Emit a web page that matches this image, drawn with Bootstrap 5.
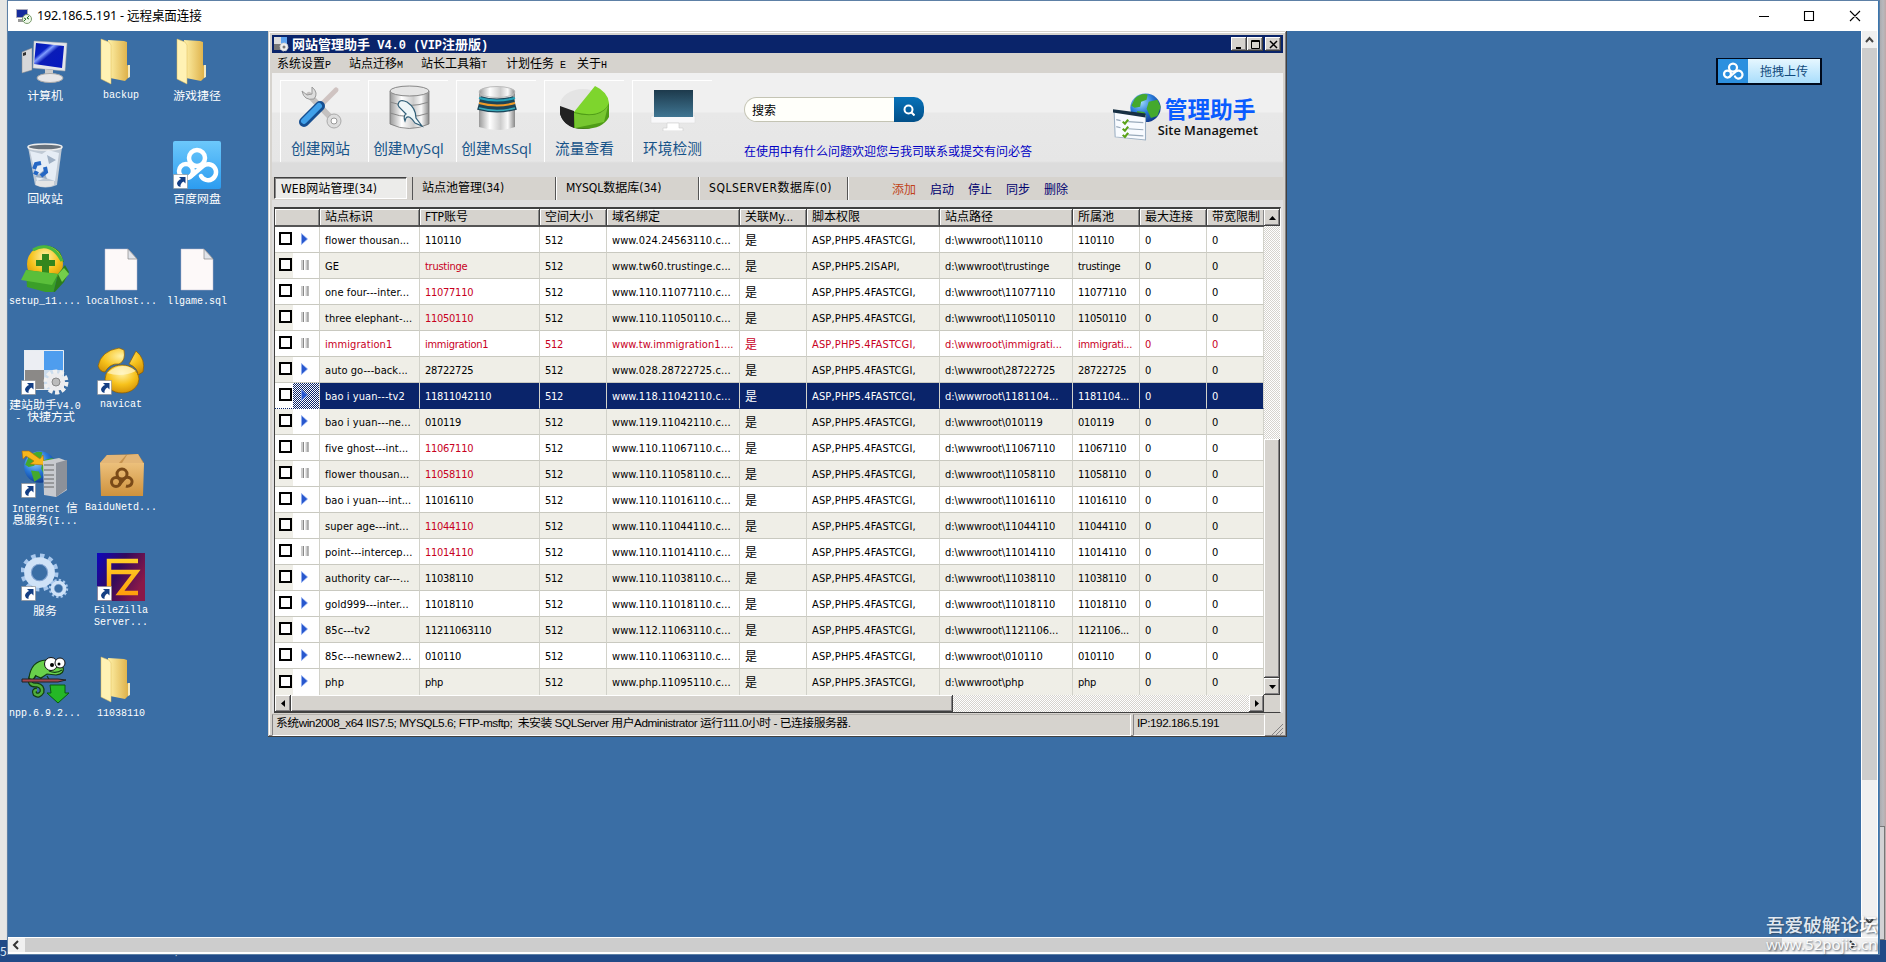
<!DOCTYPE html>
<html lang="zh-CN">
<head>
<meta charset="utf-8">
<title>192.186.5.191 - 远程桌面连接</title>
<link rel="stylesheet" href="https://cdn.jsdelivr.net/npm/bootstrap@5.3.0/dist/css/bootstrap.min.css">
<script src="https://cdn.jsdelivr.net/npm/bootstrap@5.3.0/dist/js/bootstrap.bundle.min.js"></script>
<style>
*{box-sizing:border-box}
body{margin:0;width:1886px;height:962px;overflow:hidden;background:#214a87;color:#000;font:12px/14px "Liberation Sans","Noto Sans CJK SC",sans-serif;white-space:nowrap}
svg{display:block;flex:none}
.defs{position:absolute}
.screen{position:relative;width:1886px;height:962px;overflow:hidden}
.behind{position:absolute;left:0;top:0;width:1886px;height:940px;background:linear-gradient(90deg,#e6e6e4 0 6px,#c8ccd0 8px,#a7a7ab 1879px,#b9b9bd 1883px,#bca9a9 1886px)}
.behind-box{position:absolute;right:1px;top:826px;width:7px;height:114px;background:#d2d2d4;border:1px solid #777;border-left:0}
.peek{position:absolute;top:941px;color:#dce7f5;font:12px/16px "Noto Sans CJK SC",sans-serif}
.rdp{position:absolute;left:8px;top:1px;width:1871px;height:953px;border-right:1px solid #3a75ad;background:#fff;box-shadow:0 0 0 1px #5d80a6}
.rdp-title{height:30px;font:12.6px/30px "Noto Sans","Noto Sans CJK SC",sans-serif;letter-spacing:-.17px}
.desk{width:1853px;height:906px;background:#3a6ea5;position:relative}
.vbar{width:15px;margin-left:1px;background:#f0f0f0}
.vbar i{display:block;height:732px;background:#cdcdcd}
.hbar{height:14px;margin-top:1px;background:#f0f0f0}
.hbar i{display:block;width:1757px;background:#cdcdcd}
.desk-icons{position:absolute;left:-1px;top:7px;display:grid;grid-template-columns:repeat(3,76px);grid-template-rows:repeat(7,103px);grid-auto-flow:column}
.ico{display:flex;flex-direction:column;align-items:center;color:#fff;text-align:center;font:11.9px/12px "Noto Sans CJK SC",sans-serif}
.ico div{padding-top:3px;white-space:nowrap}
.ico div.m{padding-top:4px}
.m{font-family:"Liberation Mono",monospace;font-size:10px}
span.m{line-height:0}
.app{position:absolute;left:260px;top:0;width:1019px;height:706px;background:#d6d3ce;padding:4px;box-shadow:inset -1px -1px #404040,inset 1px 1px #d6d3ce,inset -2px -2px #848284,inset 2px 2px #fff}
.app-title{height:18px;background:#0a246a;color:#fff;font:bold 13px/18px "Noto Sans CJK SC",sans-serif}
.app-title .m{font-size:12px}
.tb{width:16px;height:14px;background:#d6d3ce;box-shadow:inset -1px -1px #404040,inset 1px 1px #fff,inset -2px -2px #848284;display:flex;align-items:center;justify-content:center}
.menu{height:20px;line-height:20px;padding-left:5px;font-family:"Noto Sans CJK SC",sans-serif}
.tools{height:104px;background:linear-gradient(#f0f0f0 0 39px,#e8e8e8 40px,#e6e6e6 88px,#dcdcdc 90px 100%);padding-left:8px}
.tool{width:80px;height:82px;margin:7px 8px 0 0;border-left:1px solid #fff;border-top:1px solid #fff;display:flex;flex-direction:column;align-items:center;color:#165389;font:14.7px/18px "Open Sans","Noto Sans CJK SC",sans-serif}
.tool svg{margin:4px 0 8px}
.find{width:180px;height:25px;margin-top:24px}
.find-in{width:150px;border:1px solid #c4c4b4;border-right:0;border-radius:13px 0 0 13px;background:#fffffa;padding-left:7px;font:12px/24px "Noto Sans CJK SC",sans-serif}
.find-go{width:30px;background:linear-gradient(#0872b9,#024f88);border-radius:0 10px 10px 0}
.hint{color:#0000c4;font:12px/14px "Noto Sans CJK SC",sans-serif;margin-top:22px}
.brand{margin-top:18px}
.brand-cn{font:bold 22.7px/22px "Noto Sans CJK SC",sans-serif;color:#0a5cff}
.brand-en{font:600 12.8px/17px "Open Sans",sans-serif;color:#111;margin:2px 0 0 -7px}
.tabs{height:23px;line-height:22px;font-family:"DejaVu Sans Condensed","DejaVu Sans","Noto Sans CJK SC",sans-serif;font-size:12px}
.tabs .tab{width:143px;border-right:1px solid #555;box-shadow:1px 0 #fff}
.tabs .first{width:133px;height:22px;margin:0 5px 0 2px;padding-left:6px;border:1px solid #fff;border-top-color:#404040;border-left-color:#404040;box-shadow:inset 1px 1px #888;background:#ececea;letter-spacing:.1px}
.act{font:12px/24px "Noto Sans CJK SC",sans-serif;color:#00006e}
.grid-wrap{height:513px;padding:7px 2px 0 2px;background:#e0dfdf}
.grid-in{height:506px;border:2px solid #404040;border-width:2px 1px 1px 1px;border-right-color:#fff;background:#d6d3ce}
.sites{table-layout:fixed;width:989px;border-collapse:separate;border-spacing:0;background:#fff}
.sites th{height:18px;padding:0 0 0 5px;background:#d6d3ce;border-right:1px solid #404040;border-bottom:2px solid #555;box-shadow:inset 1px 1px #fff,inset -1px 0 #888;font:12px/15px "DejaVu Sans Condensed","Noto Sans CJK SC",sans-serif;overflow:hidden}
.sites td{height:26px;padding:2px 0 0 5px;line-height:16px;border-right:1px solid #d2d2ca;border-bottom:1px solid #c9c9c0;font-family:"DejaVu Sans Condensed","DejaVu Sans","Noto Sans CJK SC",sans-serif;font-size:11px;letter-spacing:-.27px;overflow:hidden}
.sites .c0{letter-spacing:.07px}
.sites .c3{letter-spacing:.09px}
.sites .c5{letter-spacing:.15px}
.sites .c6{letter-spacing:-.03px}
.sites tr:nth-child(even) td{background:#efeee7}
.sites tr:last-child td{border-bottom:0}
.sites .red{color:#c8001e}
.sites .c4{font-size:12px}
.sites tr.on td{background:#0a246a;color:#fff;border-bottom:1px dotted #0a246a}
.sites tr td.pick{padding:0!important;background:linear-gradient(90deg,transparent 18px,#fff 18px)}
.sites tr:nth-child(even) td.pick{background:linear-gradient(90deg,#efeee7 18px,#fff 18px)}
.sites tr.on td.pick{background:linear-gradient(90deg,#fff 18px,transparent 18px),repeating-conic-gradient(#0a246a 0 25%,#fff 0 50%) 0 0/2px 2px}
.pick i{width:13px;height:13px;border:2px solid #000;background:#fff;margin:-2px 9px 0 4px}
.pick svg{margin-top:-2px}
.track{background:repeating-conic-gradient(#d6d3ce 0 25%,#fff 0 50%) 0 0/2px 2px}
.raised{background:#d6d3ce;box-shadow:inset -1px -1px #404040,inset 1px 1px #fff,inset -2px -2px #848284;display:flex;align-items:center;justify-content:center}
.status{height:22px;margin-top:1px;font:11.8px/17px "Liberation Sans","Noto Sans CJK SC",sans-serif}
.sunk{border:1px solid #fff;border-left-color:#848284;border-top-color:#b5b2ad;height:22px;letter-spacing:-.48px}
.up{position:absolute;left:1708px;top:27px;width:106px;height:27px;background:#000a1c;padding:1px 2px 2px 2px}
.up b{width:30px;background:#2c90df}
.up span{flex:1;background:linear-gradient(#e6f7ff,#a9ddfb);color:#114a7c;font:12px/24px "Noto Sans CJK SC",sans-serif;text-align:center}
.wm{position:absolute;left:1766px;top:911px;color:#fff;opacity:.85;text-shadow:1px 1px 2px #345;font:500 18.6px/25px "Noto Sans CJK SC",sans-serif}
.wm div:last-child{font:15.1px/16px "Noto Sans",sans-serif}
</style>
</head>
<body>
<svg class="defs" width="0" height="0">
<defs>
<linearGradient id="fy" x1="0" x2="1"><stop offset="0" stop-color="#fff1a8"/><stop offset="1" stop-color="#dcae45"/></linearGradient>
<linearGradient id="mt" x1="0" x2="1"><stop offset="0" stop-color="#999"/><stop offset=".3" stop-color="#fff"/><stop offset=".6" stop-color="#ccc"/><stop offset=".8" stop-color="#fafafa"/><stop offset="1" stop-color="#888"/></linearGradient>
<linearGradient id="bl" x1="0" y1="0" x2="1" y2="1"><stop offset="0" stop-color="#0014a8"/><stop offset=".3" stop-color="#0a22c8"/><stop offset=".38" stop-color="#7f9cff"/><stop offset=".5" stop-color="#0a1cb8"/><stop offset="1" stop-color="#0518c0"/></linearGradient>
<linearGradient id="bx" x1="0" y1="0" x2="0" y2="1"><stop offset="0" stop-color="#ecc07b"/><stop offset="1" stop-color="#cf923d"/></linearGradient>
<linearGradient id="sky" x1="0" y1="0" x2="0" y2="1"><stop offset="0" stop-color="#6cc8fb"/><stop offset="1" stop-color="#2c9cf0"/></linearGradient>
<linearGradient id="scr" x1="0" y1="0" x2="0" y2="1"><stop offset="0" stop-color="#1d3a4c"/><stop offset="1" stop-color="#3f7592"/></linearGradient>
<linearGradient id="fz" x1="0" x2="1" y1="0" y2=".5"><stop offset="0" stop-color="#0d06c0"/><stop offset=".5" stop-color="#320a5c"/><stop offset="1" stop-color="#8a1848"/></linearGradient>
<linearGradient id="or" gradientUnits="userSpaceOnUse" x1="0" y1="5" x2="0" y2="45"><stop offset="0" stop-color="#ffd22a"/><stop offset="1" stop-color="#ff9a08"/></linearGradient>
<radialGradient id="gold" cx=".5" cy=".3" r=".8"><stop offset="0" stop-color="#fff2a6"/><stop offset=".5" stop-color="#f7c21c"/><stop offset="1" stop-color="#c98400"/></radialGradient>
<radialGradient id="earth" cx=".35" cy=".3" r=".8"><stop offset="0" stop-color="#9fdcff"/><stop offset=".5" stop-color="#2878d8"/><stop offset="1" stop-color="#0b2d7c"/></radialGradient>
<symbol id="arrow" viewBox="0 0 15 15"><path fill="#fff" stroke="#888" stroke-width=".6" d="M.5.5h14v14H.5z"/><path fill="#143f84" d="M6 3h6.500v6.500l-2-2q-3.500 2-3 5.500-3-.5-3.500-3.500Q4.500 6.500 8 5z"/></symbol>
<symbol id="folder" viewBox="0 0 48 48"><path fill="url(#fy)" d="M11 2 27 3l3 1v23l2 1v11l-4 4-15-3z"/><path fill="#fff2b4" stroke="#dcb95a" stroke-width=".5" d="M4 1 12 4q3 2 2 8v34L4 41z"/><path fill="#f3e9c0" d="M31 27h2v12l-2 1z"/></symbol>
<symbol id="file" viewBox="0 0 48 48"><path fill="#fdf9f9" stroke="#bbc" stroke-width=".5" d="M8 5h23l9 10v31H8z"/><path fill="#e1e4ea" stroke="#888" stroke-width=".7" d="M31 5v10h9z"/></symbol>
<symbol id="cloud" viewBox="0 0 48 48"><g fill="none" stroke="#fff" stroke-width="4.500" stroke-linecap="round"><circle cx="24" cy="17" r="8"/><path d="M28 35A8 8 0 1 0 30 25L17 36"/><circle cx="13" cy="30" r="7"/></g></symbol>
<symbol id="globe" viewBox="0 0 30 30"><circle cx="15" cy="15" r="14" fill="url(#earth)"/><path fill="#44a92d" d="M5 6q6-6 12-4l-1 5-5 2-1 5-5 1-3-2zM18 9l8-2 3 7-3 9-6 2-4-9zM7 18l7 1 2 5-6 4z"/></symbol>
<symbol id="gear" viewBox="0 0 40 40"><circle cx="20" cy="20" r="15" fill="none" stroke="#a9c8ec" stroke-width="7" stroke-dasharray="4 3.850"/><circle cx="20" cy="20" r="11.500" fill="none" stroke="#cfe2f7" stroke-width="7"/><circle cx="20" cy="20" r="8" fill="none" stroke="#7fa1cf"/></symbol>
<symbol id="play" viewBox="0 0 7 12"><path fill="#2858ce" stroke="#8cabf0" stroke-width=".7" d="M.5.5 6.500 6 .5 11.500z"/></symbol>
<symbol id="pause" viewBox="0 0 8 10"><path fill="#ccc" d="M0 0h3v10H0zM4.500 0h3v10h-3z"/><path fill="#888" d="M2 0h1v10H2zM6.500 0h1v10h-1z"/></symbol>
</defs>
</svg>
<div class="screen">
<div class="behind"><div class="behind-box"></div></div>
<span class="peek" style="left:0;top:943px">5</span><span class="peek" style="left:30px">文件 · 编辑</span><span class="peek" style="left:130px">01</span><span class="peek" style="left:175px">)</span><span class="peek" style="left:204px">远程桌面</span><span class="peek" style="left:280px">▭</span><span class="peek" style="left:1640px">▭</span>
<main class="rdp">
 <div class="rdp-title d-flex align-items-center">
  <svg width="16" height="16" viewBox="0 0 16 16" style="margin:0 5px 0 8px"><path fill="#152c9c" stroke="#aab" d="M.5 1.500h11v8H.5z"/><path fill="#999" d="M2 11h8v3H2z"/><circle cx="11" cy="11" r="4.500" fill="#eff8ea" stroke="#7b9c6c"/><path d="m8 10 2 1-2 2m5-5-2 2 2 1" fill="none" stroke="#287328"/></svg>
  <span>192.186.5.191 - 远程桌面连接</span>
  <svg class="ms-auto" style="margin-right:13px" width="110" height="12" viewBox="0 0 110 12" fill="none" stroke="#000" stroke-width="1.100"><path d="M4 6.500h10M49.500 1.500h9v9h-9zM95 1l10 10M105 1 95 11"/></svg>
 </div>
 <div class="d-flex">
 <section class="desk">
  <div class="desk-icons">
   <div class="ico"><svg width="48" height="48" viewBox="0 0 48 48"><path fill="#d7d7d9" stroke="#888" stroke-width=".5" d="m1 14 10-4v22L1 35z"/><path fill="#333" d="m2 15 3-1v3l-3 1z"/><path fill="#e3e6ea" stroke="#aaa" stroke-width=".5" d="m13 3 33 2-2 28-32-3z"/><path fill="url(#bl)" d="m15 5 28 3-2 22-28-4z"/><path fill="#ccc" d="m24 31 8 1v6h-8z"/><ellipse cx="29" cy="40" rx="13" ry="4.500" fill="#e6e6e8" stroke="#aaa"/></svg><div>计算机</div></div>
   <div class="ico"><svg width="48" height="48" viewBox="0 0 48 48"><path fill="#bfc9d4" d="m7 6 34 0-5 38q-12 5-22 0z"/><path fill="#e6edf5" d="m9 10 12 3 6-4 11 3-4 28-9-3-9 3z"/><path fill="#9fb0c4" d="m26 14 9 5-7 4zM14 36l9-7 3 9z"/><ellipse cx="24" cy="6" rx="17" ry="3" fill="#67717b" stroke="#eee" stroke-width="1.500"/><path fill="none" stroke="#2567c4" stroke-width="4" d="m13 28 2-5 5-1m4 4 1 5-5 4m-3-2-4-2"/><path fill="#e5e5e5" d="M15 40h18v4q-9 4-18 0z"/></svg><div>回收站</div></div>
   <div class="ico"><svg width="48" height="48" viewBox="0 0 48 48"><path fill="#26912a" d="M11 8Q25-5 39 8l4 10H26z"/><circle cx="24" cy="20" r="18" fill="url(#gold)"/><path fill="none" stroke="#4bb83c" stroke-width="3" d="M12 6q18-10 29 11"/><path fill="#34861d" d="M21 10h7v6h6v6h-6v7h-7v-7h-6v-6h6z"/><path fill="#3b9f28" d="m5 26 32 4-5 20-26-7z"/><path fill="#5abf3a" d="m0 36 5-10 32 4-6 11z"/><path fill="#2b7d1c" d="m37 30 7-9 4 7-5 10-11 12z"/><path fill="#74cf4a" d="m37 30 6-6 5 6-7 8z"/></svg><div class="m">setup_11....</div></div>
   <div class="ico"><svg width="48" height="48" viewBox="0 0 48 48"><path fill="#eceef3" d="M3 3h20v20H3z"/><path fill="#4e9dee" d="M23 3h20v20H23z"/><path fill="#8b8987" d="M3 23h20v20H3z"/><path fill="#cbdced" d="M23 23h20v20H23z"/><path fill="none" stroke="#e8edf2" d="M3.500 3.500h39v39h-39z"/><circle cx="35" cy="35" r="10" fill="none" stroke="#f0f0f0" stroke-width="5" stroke-dasharray="4 2.280"/><circle cx="35" cy="35" r="9" fill="#ececee"/><circle cx="35" cy="35" r="4" fill="#bbb" stroke="#888"/><use href="#arrow" x="0" y="33" width="15" height="15"/></svg><div>建站助手<span class="m">V4.0</span><br><span class="m">-&nbsp;</span>快捷方式</div></div>
   <div class="ico"><svg width="48" height="48" viewBox="0 0 48 48"><use href="#globe" x="2" y="0" width="34" height="34"/><path fill="#f7b71c" stroke="#b96f00" stroke-width=".6" d="m1 1 7 0 11 8 3-4 1 10-14-1 4-3-8-5-3 3z"/><path fill="#c8cacf" d="m22 11 16-3 8 3v29l-11 7-12-2z"/><path fill="#8d9199" d="m35 13 11-3v29l-11 8z"/><path stroke="#666" d="M23 15h10m-10 5h10m-10 5h10m-10 4h10m-10 4h10m-10 4h10"/><use href="#arrow" x="0" y="33" width="15" height="15"/></svg><div><span class="m">Internet&nbsp;</span>信<br>息服务<span class="m">(I...</span></div></div>
   <div class="ico"><svg width="48" height="48" viewBox="0 0 48 48"><use href="#gear" x="-2" y="-1" width="41" height="41"/><use href="#gear" x="27" y="25" width="21" height="21"/><use href="#arrow" x="0" y="33" width="15" height="15"/></svg><div>服务</div></div>
   <div class="ico"><svg width="48" height="48" viewBox="0 0 48 48"><path fill="none" stroke="#123c12" stroke-width="5" d="M10 21q-3 9 6 8 6 1 5 7-3 5-7 2-2-4 2-4"/><path fill="none" stroke="#4fae3c" stroke-width="2.500" d="M10 21q-3 9 6 8 6 1 5 7-3 5-7 2-2-4 2-4"/><path fill="#69d04b" stroke="#123c12" stroke-width="1.200" d="M25 4Q10 5 8 22l3 3 4-5 5 2 6-4 9 1q9-1 7-8z"/><path fill="none" stroke="#123c12" stroke-width="1.200" d="M28 15q7 3 13-1M15 19l-3 5m9-3-4 5m9-6 3 5"/><circle cx="30" cy="8" r="6.500" fill="#fff" stroke="#111"/><circle cx="39" cy="7" r="5" fill="#fff" stroke="#111"/><circle cx="31" cy="9" r="2"/><circle cx="38" cy="8" r="1.500"/><path fill="#a4464e" stroke="#222" d="M1 23h36l8 1-8 2H1z"/><path fill="#25b726" stroke="#085d0a" d="M29 29h15v8h4L37 47 26 37h4z"/></svg><div class="m">npp.6.9.2...</div></div>
   <div class="ico"><svg width="48" height="48"><use href="#folder"/></svg><div class="m">backup</div></div>
   <div></div>
   <div class="ico"><svg width="48" height="48"><use href="#file"/></svg><div class="m">localhost...</div></div>
   <div class="ico"><svg width="48" height="48" viewBox="0 0 48 48"><ellipse cx="25" cy="32" rx="17" ry="14" fill="url(#gold)" stroke="#8b5c00" stroke-width=".7"/><path fill="url(#gold)" stroke="#8b5c00" stroke-width=".7" d="M27 3q2 11-5 14-9-1-14 8-5 0-7-6Q4 4 22 1zM39 4q10 8 7 21l-5 3q0-7-9-11z"/><path fill="#fff7ce" opacity=".7" d="M10 26q15-13 29-2-14 7-29 2z"/><use href="#arrow" x="0" y="33" width="15" height="15"/></svg><div class="m">navicat</div></div>
   <div class="ico"><svg width="48" height="48" viewBox="0 0 48 48"><path fill="#c6924c" d="m3 13 7-8 31-1 6 9z"/><path fill="#e3b677" d="m3 13 7-8 19 0-7 8zM30 5l11-1 5 9H25z"/><path fill="url(#bx)" d="M3 13h44l-1 33H4z"/><g fill="none" stroke="#7a4a18" stroke-width="3"><circle cx="25" cy="24" r="5"/><circle cx="19" cy="32" r="4.500"/><path d="M29 36a4.500 4.500 0 1 0-2-7l-5 6"/></g></svg><div class="m">BaiduNetd...</div></div>
   <div class="ico"><svg width="48" height="48" viewBox="0 0 48 48"><path fill="url(#fz)" d="M0 0h48v48H0z"/><path fill="none" stroke="url(#or)" stroke-width="4.500" d="M12 45V8h29M12 19h27L23 40h18"/><use href="#arrow" x="0" y="33" width="15" height="15"/></svg><div class="m">FileZilla<br>Server...</div></div>
   <div class="ico"><svg width="48" height="48"><use href="#folder"/></svg><div class="m">11038110</div></div>
   <div class="ico"><svg width="48" height="48"><use href="#folder"/></svg><div>游戏捷径</div></div>
   <div class="ico"><svg width="48" height="48" viewBox="0 0 48 48"><rect width="48" height="48" rx="2" fill="url(#sky)"/><use href="#cloud" width="48" height="48"/><use href="#arrow" x="0" y="33" width="15" height="15"/></svg><div>百度网盘</div></div>
   <div class="ico"><svg width="48" height="48"><use href="#file"/></svg><div class="m">llgame.sql</div></div>
  </div>

  <section class="app">
   <div class="app-title d-flex align-items-center">
    <svg width="15" height="15" viewBox="0 0 15 15" style="margin:0 3px 0 2px"><path fill="#ddd" d="M0 0h7v7H0z"/><path fill="#5ea3ef" d="M7 0h6v7H7z"/><path fill="#777" d="M0 7h7v6H0z"/><circle cx="10" cy="10" r="4" fill="#eee" stroke="#ccc" stroke-dasharray="2 1"/><circle cx="10" cy="10" r="1.500" fill="#777"/></svg>
    <span>网站管理助手<span class="m">&nbsp;V4.0&nbsp;(VIP</span>注册版<span class="m">)</span></span>
    <div class="d-flex ms-auto" style="padding-right:2px"><span class="tb"><svg width="9" height="9"><path d="M1 7h5v2H1z"/></svg></span><span class="tb"><svg width="9" height="9"><path fill="none" stroke="#000" d="M.5.500h8v8h-8zM0 1.500h9"/></svg></span><span class="tb" style="margin-left:2px"><svg width="9" height="9"><path stroke="#000" stroke-width="1.500" d="m1 1 7 7M8 1 1 8"/></svg></span></div>
   </div>
   <div class="menu d-flex"><span style="width:72px">系统设置<span class="m">P</span></span><span style="width:72px">站点迁移<span class="m">M</span></span><span style="width:85px">站长工具箱<span class="m">T</span></span><span style="width:71px">计划任务<span class="m">&nbsp;E</span></span><span>关于<span class="m">H</span></span></div>
   <div class="tools d-flex">
    <div class="tool"><svg width="48" height="46" viewBox="0 0 48 46"><path stroke="#c4c1c0" stroke-width="6" stroke-linecap="round" d="m12 10 24 25"/><circle cx="37" cy="36" r="7" fill="#ddd" stroke="#aaa"/><circle cx="37" cy="36" r="3" fill="#fff" stroke="#999"/><path fill="#ddd" stroke="#999" d="M5 6q2 10 12 8 5-6-2-12v7l-5 1z"/><path stroke="#cfc3c1" stroke-width="5" stroke-linecap="round" d="M39 5 24 20"/><path stroke="#174f91" stroke-width="10" stroke-linecap="round" d="M23 21 7 37"/><path stroke="#41a1ea" stroke-width="6" stroke-linecap="round" d="M22 21 7 36"/></svg>创建网站</div>
    <div class="tool"><svg width="48" height="46" viewBox="0 0 48 46"><path fill="url(#mt)" stroke="#777" stroke-width=".8" d="M5 6v33q19 9 39 0V6z"/><path fill="none" stroke="#888" d="M5 17q19 7 39 0M5 28q19 7 39 0"/><ellipse cx="24.500" cy="6" rx="19.500" ry="5" fill="#e5e5e5" stroke="#888"/><path fill="#eef6f8" stroke="#315f78" stroke-width="1.200" d="M13 20q1-7 9-3 9 6 9 16l6 8-7-3q-6-9-9-5l-1 3q-2-5 1-7l-7-7z"/></svg>创建MySql</div>
    <div class="tool"><svg width="48" height="46" viewBox="0 0 48 46"><path fill="url(#mt)" d="M6 6v36q18 6 36 0V6z"/><path fill="none" stroke="#1b4559" stroke-width="14" d="M6 18q18 5 36 0"/><path fill="none" stroke="#26a2b8" stroke-width="2" d="M6 13q18 5 36 0"/><path fill="none" stroke="#ef9a28" stroke-width="2" d="M6 18q18 5 36 0"/><path fill="none" stroke="#39aabb" stroke-width="1.500" d="M6 23q18 5 36 0"/><ellipse cx="24" cy="7" rx="18" ry="5.500" fill="url(#mt)" stroke="#bbb"/></svg>创建MsSql</div>
    <div class="tool"><svg width="52" height="46" viewBox="0 0 52 46"><ellipse cx="24" cy="26" rx="23" ry="18" fill="#222"/><ellipse cx="24" cy="20" rx="23" ry="16" fill="#e4e4e4"/><path fill="#222" d="M1 21v8q3 10 14 14V26z"/><path fill="#4f9c17" d="M15 27v16q27 4 35-11V18z"/><path fill="#7ed52d" d="M15 27 36 1q13 6 14 17-7 16-35 9z"/><path fill="#93e541" opacity=".6" d="M15 28q25 7 34-7l-4 16-29 6z"/></svg>流量查看</div>
    <div class="tool"><svg width="48" height="46" viewBox="0 0 48 46"><path fill="#f8f8fa" stroke="#ddd" stroke-width=".6" d="M2 31h44v7H2z"/><path fill="#fff" stroke="#ccc" stroke-width=".6" d="M18 38h12v5h4v3H14v-3h4z"/><path fill="url(#scr)" d="M5 5h39v27H5z"/></svg>环境检测</div>
    <div style="margin-left:24px"><div class="find d-flex"><div class="find-in">搜索</div><div class="find-go d-flex align-items-center justify-content-center"><svg width="12" height="12" fill="none" stroke="#fff" stroke-width="2"><circle cx="5.500" cy="5.500" r="4"/><path d="m8 8 3.500 3.500"/></svg></div></div>
    <div class="hint">在使用中有什么问题欢迎您与我司联系或提交有问必答</div></div>
    <div class="brand d-flex ms-auto" style="margin-right:25px"><svg width="52" height="51" viewBox="0 0 48 50" preserveAspectRatio="none"><use href="#globe" x="15" y="0" width="30" height="33"/><path fill="#f8fbff" stroke="#9db0c3" d="m1 19 29 5v24L2 45z"/><path fill="#173044" d="m0 18 30 4v4L0 21z"/><g stroke="#9ab" stroke-width="1.200"><path d="m14 30 14 1m-14 6 14 1m-14 5 14 1M3 28l4 1m-4 6 4 1"/></g><path fill="none" stroke="#5ba319" stroke-width="2" d="m9 30 2 2 3-4m-5 9 2 2 3-4m-5 8 2 2 3-4"/></svg><div style="margin-top:7px"><div class="brand-cn">管理助手</div><div class="brand-en">Site Managemet</div></div></div>
   </div>
   <div class="tabs d-flex"><div class="first">WEB网站管理(34)</div><div class="d-flex" style="border-left:1px solid #555"><div class="tab" style="padding-left:9px">站点池管理(34)</div><div class="tab" style="padding-left:10px">MYSQL数据库(34)</div><div class="tab" style="padding-left:10px;width:149px;letter-spacing:.55px">SQLSERVER数据库(0)</div></div><div class="act d-flex" style="gap:14px;margin-left:44px"><span style="color:#c0431a">添加</span><span>启动</span><span>停止</span><span>同步</span><span>删除</span></div></div>
   <div class="grid-wrap"><div class="grid-in">
    <div class="d-flex" style="height:486px">
     <table class="sites"><colgroup><col style="width:45px"><col style="width:100px"><col style="width:120px"><col style="width:67px"><col style="width:133px"><col style="width:67px"><col style="width:133px"><col style="width:133px"><col style="width:67px"><col style="width:67px"><col style="width:57px"></colgroup>
      <thead><tr><th></th><th>站点标识</th><th>FTP账号</th><th>空间大小</th><th>域名绑定</th><th>关联My...</th><th>脚本权限</th><th>站点路径</th><th>所属池</th><th>最大连接</th><th style="border-right:0">带宽限制</th></tr></thead>
      <tbody id="rows"></tbody></table>
     <div class="track d-flex flex-column" style="width:16px"><div class="raised" style="height:17px"><svg width="7" height="4"><path d="M0 4h7L3.500 0z"/></svg></div><div class="raised" style="height:239px;margin-top:213px"></div><div class="raised" style="height:17px"><svg width="7" height="4"><path d="M0 0h7L3.500 4z"/></svg></div></div>
    </div>
    <div class="d-flex" style="height:17px"><div class="raised" style="width:16px"><svg width="4" height="7"><path d="M4 0v7L0 3.500z"/></svg></div><div class="raised" style="width:662px"></div><div class="track" style="width:296px"></div><div class="raised" style="width:15px"><svg width="4" height="7"><path d="M0 0v7l4-3.500z"/></svg></div></div>
   </div></div>
   <div class="status d-flex"><div class="sunk" style="width:859px;padding-left:3px">系统win2008_x64 IIS7.5; MYSQL5.6; FTP-msftp;&nbsp; 未安装 SQLServer 用户Administrator 运行111.0小时 - 已连接服务器.</div><div class="sunk" style="width:132px;margin-left:2px;padding-left:3px">IP:192.186.5.191</div>
   <svg class="ms-auto mt-auto" width="13" height="13" stroke="#848284"><path d="M1 13 13 1M5 13l8-8M9 13l4-4"/></svg></div>
  </section>
  <div class="up d-flex"><b class="d-flex align-items-center justify-content-center"><svg width="24" height="24"><use href="#cloud"/></svg></b><span>拖拽上传</span></div>
 </section>
 <div class="vbar"><svg width="15" height="17" fill="none" stroke="#444" stroke-width="2"><path d="m4 11 3.500-4 3.500 4"/></svg><i></i><svg width="15" height="17" style="margin-top:133px" fill="none" stroke="#444" stroke-width="2"><path d="m4 6 3.500 4 3.500-4"/></svg></div>
 </div>
 <div class="hbar d-flex"><svg width="17" height="14" fill="none" stroke="#333" stroke-width="2"><path d="M10 3 6 7l4 4"/></svg><i></i><svg width="17" height="14" style="margin-left:62px" fill="none" stroke="#333" stroke-width="2"><path d="m6 3 4 4-4 4"/></svg></div>
</main>
<div class="wm"><div>吾爱破解论坛</div><div>www.52pojie.cn</div></div>
</div>
<script>
// running flag | site | ftp account | domain | script rights | path | pool | red cells (1 = account, 2 = whole row)
const sites = [
[1,'flower thousan...','110110','www.024.24563110.c...','5.4FASTCGI','110110','110110'],
[0,'GE','trustinge','www.tw60.trustinge.c...','5.2ISAPI','trustinge','trustinge',1],
[0,'one four---inter...','11077110','www.110.11077110.c...','5.4FASTCGI','11077110','11077110',1],
[0,'three elephant-...','11050110','www.110.11050110.c...','5.4FASTCGI','11050110','11050110',1],
[0,'immigration1','immigration1','www.tw.immigration1....','5.4FASTCGI','immigrati...','immigrati...',2],
[1,'auto go---back...','28722725','www.028.28722725.c...','5.4FASTCGI','28722725','28722725'],
[1,'bao i yuan---tv2','11811042110','www.118.11042110.c...','5.4FASTCGI','1181104...','1181104...'],
[1,'bao i yuan---ne...','010119','www.119.11042110.c...','5.4FASTCGI','010119','010119'],
[0,'five ghost---int...','11067110','www.110.11067110.c...','5.4FASTCGI','11067110','11067110',1],
[0,'flower thousan...','11058110','www.110.11058110.c...','5.4FASTCGI','11058110','11058110',1],
[1,'bao i yuan---int...','11016110','www.110.11016110.c...','5.4FASTCGI','11016110','11016110'],
[0,'super age---int...','11044110','www.110.11044110.c...','5.4FASTCGI','11044110','11044110',1],
[0,'point---intercep...','11014110','www.110.11014110.c...','5.4FASTCGI','11014110','11014110',1],
[1,'authority car---...','11038110','www.110.11038110.c...','5.4FASTCGI','11038110','11038110'],
[1,'gold999---inter...','11018110','www.110.11018110.c...','5.4FASTCGI','11018110','11018110'],
[1,'85c---tv2','11211063110','www.112.11063110.c...','5.4FASTCGI','1121106...','1121106...'],
[1,'85c---newnew2...','010110','www.110.11063110.c...','5.4FASTCGI','010110','010110'],
[1,'php','php','www.php.11095110.c...','5.3FASTCGI','php','php']];
document.getElementById('rows').innerHTML = sites.map((s, i) => {
  const icon = s[0] ? '<svg width="7" height="12"><use href="#play"/></svg>' : '<svg width="8" height="10"><use href="#pause"/></svg>';
  const cells = [s[1], s[2], '512', s[3], '是', 'ASP,PHP' + s[4] + ',', 'd:\\wwwroot\\' + s[5], s[6], '0', '0'];
  return `<tr class="${i === 6 ? 'on' : ''}"><td class="pick"><div class="d-flex align-items-center"><i></i>${icon}</div></td>` +
    cells.map((c, k) => `<td class="c${k}${(s[7] === 2 && k !== 7) || (s[7] === 2) || (s[7] === 1 && k === 1) ? ' red' : ''}">${c}</td>`).join('') + '</tr>';
}).join('');
</script>
</body>
</html>
